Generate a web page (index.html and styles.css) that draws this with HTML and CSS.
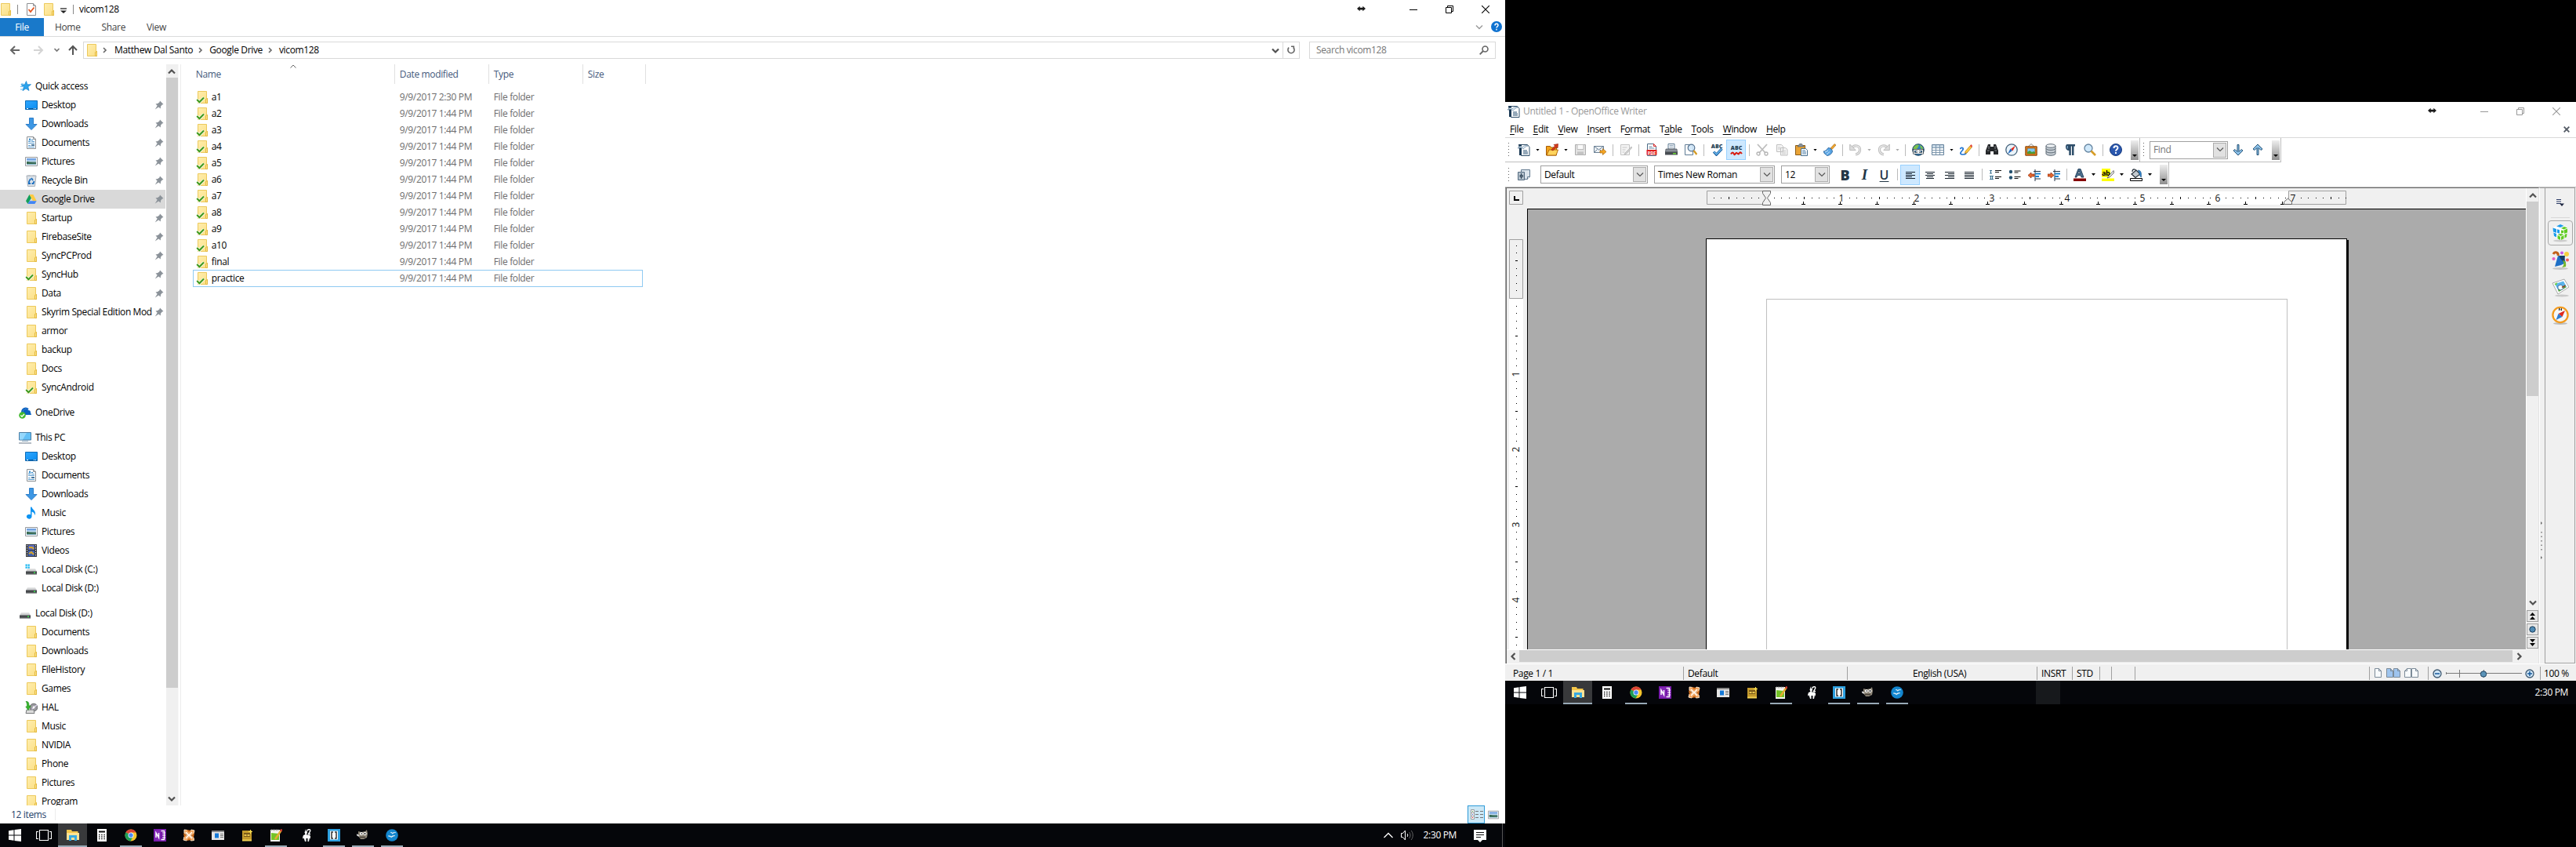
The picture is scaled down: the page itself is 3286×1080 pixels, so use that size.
FILE: index.html
```html
<!DOCTYPE html>
<html lang="en">
<head>
<meta charset="utf-8">
<title>Desktop</title>
<link rel="stylesheet" href="styles.css">
</head>
<body>
<svg class="defs" aria-hidden="true">
<defs>
<linearGradient id="gFold" x1="0" x2="1" y2="1"><stop offset="0" stop-color="#ffeeae"/><stop offset="1" stop-color="#fbdf86"/></linearGradient>
<linearGradient id="gBlue" x1="0" x2="1" y2="1"><stop offset="0" stop-color="#2ea7ff"/><stop offset="1" stop-color="#0a8cf0"/></linearGradient>
<linearGradient id="gDisk" x2="0" y2="1"><stop offset="0" stop-color="#e8e8e8"/><stop offset="1" stop-color="#b9bcbe"/></linearGradient>
<linearGradient id="gSky" x2="0" y2="1"><stop offset="0" stop-color="#4a86d8"/><stop offset=".5" stop-color="#cfe6f5"/><stop offset=".6" stop-color="#3c6e60"/><stop offset="1" stop-color="#7fb2cf"/></linearGradient>
<symbol id="folder" viewBox="0 0 16 16"><path d="M2.5.5h11v9h1v6h-12z" fill="url(#gFold)" stroke="#ecc95c"/><path d="M12.5 15.5v-5l2-1v6z" fill="#ffe48d" stroke="#e3b93f"/></symbol>
<symbol id="synced" viewBox="0 0 16 16"><use href="#folder"/><path d="M1.5 11.2l3 3L10 8.5" fill="none" stroke="#fff" stroke-width="3.6"/><path d="M1.2 11l3.2 3.2L10 8.5" fill="none" stroke="#3f9a1c" stroke-width="2.1"/></symbol>
<symbol id="star" viewBox="0 0 16 16"><path d="M9.5 1.5l1.3 4.3 4.7-.1-3.7 3 1.2 4.8-4-2.6-4 2.8 1.4-5-3.6-2.7 4.6-.1z" fill="#2aa3ec" stroke="#1583cf" stroke-width=".7"/><path d="M3 5h3M2 8.5h3M2 12h3" stroke="#58b7ee"/></symbol>
<symbol id="desktop" viewBox="0 0 16 16"><path d="M.5 2.5h15v11H.5z" fill="url(#gBlue)" stroke="#0b6bb8"/><path d="M1 12.5h14" stroke="#075a9e"/><path d="M2 12.5h2M11 12.5h1M13 12.5h1" stroke="#fff"/></symbol>
<symbol id="download" viewBox="0 0 16 16"><path d="M5.500 .5h5v8H15L8 15.500 1 8.500h4.500z" fill="#3c97e4" stroke="#2c7dc8"/></symbol>
<symbol id="document" viewBox="0 0 16 16"><path d="M2.500 .5h8l3 3v12h-11z" fill="#fff" stroke="#8b8f93"/><path d="M10.500 .5v3h3" fill="none" stroke="#8b8f93"/><path d="M4 6.500h3M8 6.500h4M4 8.500h8M4 11.500h3M4 13.500h8" stroke="#5a9bce"/><path d="M5 5.500l1-3 1 3M8 4.500h2" stroke="#1d7fc8" fill="none"/><path d="M8 10h4v2H8z" fill="#48759a"/></symbol>
<symbol id="picture" viewBox="0 0 16 16"><path d="M.5 2.500h15v11H.5z" fill="#fff" stroke="#92979c"/><path d="M2 4h12v8H2z" fill="url(#gSky)"/><path d="M2 8c4 0 5 2 12 2v1H2z" fill="#396b50"/></symbol>
<symbol id="recycle" viewBox="0 0 16 16"><path d="M2 2l12 0-1.500 13.500h-9z" fill="#dce2e8" stroke="#a7afb8"/><path d="M2 3l3-2 3 1.500L11 1l3 2z" fill="#b8bec5"/><path d="M8 5l2 3M11.500 9l-1 3H8.500M7 12H4.800L5 9.500 7 6" fill="none" stroke="#1b6fc0" stroke-width="1.800"/></symbol>
<symbol id="gdrive" viewBox="0 0 16 16"><path d="M5.500 2L1 10.200 3.500 14 8 6.200z" fill="#13a05c"/><path d="M5.500 2h4.800l4.400 8.200H9.900z" fill="#fdcb43"/><path d="M3.500 14l2.300-3.800h8.900L12.300 14z" fill="#4285f4"/></symbol>
<symbol id="onedrive" viewBox="0 0 16 16"><path d="M5 11V7a4 4 0 0 1 7-2 3 3 0 0 1 3 3l1 3z" fill="#0b62c1"/><path d="M4 8C4 3 9 1 12 4" stroke="#0b62c1" stroke-width="2" fill="none"/><circle cx="4.500" cy="11.500" r="4.300" fill="#45ba31"/><path d="M2.300 11.500l1.700 1.700 3-3.200" stroke="#fff" stroke-width="1.400" fill="none"/></symbol>
<symbol id="pc" viewBox="0 0 16 16"><path d="M.5 1.500h15v9.500H.5z" fill="#62c0f7" stroke="#4a7da3"/><path d="M1 2h9L5 10.500H1z" fill="#95d7fb"/><path d="M4 12.500h8" stroke="#9cb3c4"/><path d="M0 15h16" stroke="#8b98a4" stroke-width="1.300"/></symbol>
<symbol id="music" viewBox="0 0 16 16"><path d="M7 .5h1.500c.5 3 4.500 4 4.500 8 0 1-.5 2-1 2.500.3-3-1.500-4-3.500-4.500v6.300A3.300 2.900 0 1 1 7 10.300z" fill="#0c93f2"/></symbol>
<symbol id="video" viewBox="0 0 16 16"><path d="M1 0h14v16H1z" fill="#33363c"/><path d="M4 1h8v6H4z" fill="#5b6cc0"/><path d="M4 8h8v7H4z" fill="#3f62b4"/><path d="M5 4h4l2 2M5 12l3-2 3 3" stroke="#d8a528" stroke-width="2" fill="none"/><path d="M2.500 1v15M13.500 1v15" stroke="#e6e6e6" stroke-dasharray="1.500 1.500"/></symbol>
<symbol id="disk" viewBox="0 0 16 16"><path d="M3 7h10l2 4H1z" fill="url(#gDisk)"/><path d="M1 10.500h14v4H1z" fill="#46494c"/><path d="M1 14.200h14" stroke="#9a9d9f" stroke-width=".8"/><path d="M11 11.500h2v1.500h-2z" fill="#35e04a"/></symbol>
<symbol id="diskwin" viewBox="0 0 16 16"><use href="#disk"/><path d="M.5 1.500h2.200v2.200H.5zM3.500 1.500h2.300v2.200H3.500zM.5 4.500h2.200v2.200H.5zM3.500 4.500h2.300v2.200H3.500z" fill="#14b4f0"/></symbol>
<symbol id="hal" viewBox="0 0 16 16"><circle cx="11" cy="8" r="4.800" fill="#9a9a9f" stroke="#66686b"/><path d="M11 8l4-3M11 8l-3 4" stroke="#ddd3ee" stroke-width="1.500"/><circle cx="11" cy="8" r="1.400" fill="#fff"/><path d="M2 11h9l1 4.500H1z" fill="#dcdcdc" stroke="#77797b"/><path d="M1 0c4 0 4 4 4 6h2L4 11.500.8 7h1.500C3 4 2 2 1 0z" fill="#36b52d" stroke="#1c8a18" stroke-width=".6"/></symbol>
<symbol id="pin" viewBox="0 0 12 12"><path d="M7 .5L11.500 5l-1.700.6L8 7.800l-.2 2.700-2.500-2L.8 11.500l2.900-4.700L1.500 4.600 4.200 4l2.300-1.800z" fill="#8b9299"/></symbol>
<symbol id="check" viewBox="0 0 14 16"><path d="M1.500 .5h8l3 3v12h-11z" fill="#fff" stroke="#8d8f92"/><path d="M9.500 .5v3h3" fill="none" stroke="#8d8f92"/><path d="M3.500 8l2.500 3 4.500-5.500" stroke="#e4551f" stroke-width="1.800" fill="none"/></symbol>
<symbol id="moves" viewBox="0 0 12 8"><path d="M0 4l4-3.500v2h4v-2L12 4 8 7.500v-2H4v2z" fill="#1a1a1a"/></symbol>
<symbol id="up" viewBox="0 0 10 8"><path d="M1 6.500l4-4 4 4" fill="none" stroke="#505050" stroke-width="2.200"/></symbol>
<symbol id="down" viewBox="0 0 10 8"><path d="M1 1.500l4 4 4-4" fill="none" stroke="#505050" stroke-width="2.200"/></symbol>
<symbol id="thin" viewBox="0 0 10 8"><path d="M1 1.500l4 4 4-4" fill="none" stroke="#5a5a5a" stroke-width="1.200"/></symbol>
<symbol id="min" viewBox="0 0 10 10"><path d="M0 5.500h10" stroke="currentColor"/></symbol>
<symbol id="restore" viewBox="0 0 10 10"><path d="M.5 2.500h7v7h-7zM2.500 2.500v-2h7v7h-2" fill="none" stroke="currentColor"/></symbol>
<symbol id="close" viewBox="0 0 10 10"><path d="M0 0l10 10M10 0L0 10" stroke="currentColor" stroke-width="1.100"/></symbol>
<symbol id="win" viewBox="0 0 16 16"><path d="M0 2.200l6.500-.9v6.200H0zM7.500 1.100L16 0v7.500H7.500zM0 8.500h6.500v6.200L0 13.800zM7.500 8.500H16V16l-8.500-1.100z" fill="#fff"/></symbol>
<symbol id="tview" viewBox="0 0 20 16"><path d="M4.500 1.500h11v13h-11zM3 3.500H.5v9H3M17 3.500h2.500v9H17" fill="none" stroke="#fff" stroke-width="1.100"/></symbol>
<symbol id="texp" viewBox="0 0 16 16"><path d="M0 1h6l1 2h7.500v3H0z" fill="#f4c64a"/><path d="M0 5h16v9H0z" fill="#ffe394"/><path d="M3 15V8h10v7h-3v-4H6v4z" fill="#37a9e1"/></symbol>
<symbol id="tcalc" viewBox="0 0 12 16"><path d="M0 0h12v16H0z" fill="#fff"/><path d="M2 3.500h8" stroke="#111" stroke-width="2"/><path d="M2 7.500h8M2 10h8M2 12.500h8" stroke="#111" stroke-width="1.300" stroke-dasharray="1.400 1.800"/></symbol>
<symbol id="chrome" viewBox="0 0 16 16"><circle cx="8" cy="8" r="7.500" fill="#f6c52b"/><path d="M8 8L1.500 4.200A7.500 7.500 0 0 1 14.600 4.500H8z" fill="#dc4437"/><path d="M1.500 4.200A7.500 7.500 0 0 0 7.500 15.500L10.500 10 8 8z" fill="#1c9c56"/><circle cx="8" cy="8" r="3.500" fill="#fff"/><circle cx="8" cy="8" r="2.700" fill="#4a8af4"/></symbol>
<symbol id="onenote" viewBox="0 0 16 16"><path d="M0 0h16v16H0z" fill="#7719aa"/><path d="M9.500 2.500h4v11h-4" fill="none" stroke="#fff" stroke-width="1.300"/><path d="M11 5h4M11 8h4M11 11h4" stroke="#fff" stroke-width="1.200"/><path d="M1.500 2l7-1v14l-7-1z" fill="#8429b6"/><path d="M3 11V5l3.500 6V5" fill="none" stroke="#fff" stroke-width="1.500"/></symbol>
<symbol id="nexus" viewBox="0 0 16 16"><path d="M2 1l4 .5L8 5l3-4 4 1-1 4-4 2 4 3 .5 3.500-4 .5L8 11l-3 4-4-1 1-4 4-2-4-3z" fill="#f3a55c" stroke="#fbe3c8" stroke-width="1"/><path d="M5 1l3 4 3-3zM5 15l3-4 3 3zM1 5l4 3-3 3zM15 5l-4 3 3 3z" fill="#d9701b"/><path d="M4 4l8 8M12 4l-8 8" stroke="#fff" stroke-width="1.400"/></symbol>
<symbol id="news" viewBox="0 0 16 14"><path d="M0 1h16v12H0z" fill="#e5e5e5"/><path d="M0 1h16v2H0z" fill="#888"/><path d="M4 4.500h5v6H4z" fill="#1479d7"/><path d="M11 5.500h4M11 7.500h4M11 9.500h4" stroke="#777"/></symbol>
<symbol id="book" viewBox="0 0 14 16"><path d="M1 2h12v13H1z" fill="#c49a2c"/><path d="M1 13.500h12v2H1z" fill="#f0d052"/><path d="M3 5h8v5H3z" fill="#7b5a19"/><path d="M3.500 7h3v2h-3zM7.500 7h3v2h-3z" fill="#e8c550"/><path d="M11 1h1v2h2v1h-2v2h-1V4H9V3h2z" fill="#f4df54"/></symbol>
<symbol id="npp" viewBox="0 0 16 16"><path d="M1 1h12v15H1z" fill="#f7f7f2"/><path d="M2 5l10 1v8H2z" fill="#74c327"/><path d="M2 1.500h10" stroke="#999" stroke-width="2" stroke-dasharray="1 1"/><path d="M14.500 2L7 13" stroke="#e5ad31" stroke-width="2.500"/><path d="M15.500 .5L14 3" stroke="#cf3a2f" stroke-width="2.500"/></symbol>
<symbol id="wolf" viewBox="0 0 12 16"><path d="M5 0L3.500 4.500 4.500 7 2 8l-1 3 1 2 .5-2L4 16h1.500v-4h2v4H9l1-5 1 2V9L9.500 7.500H6L7 4V0L5 4z" fill="#fff"/><path d="M7.500 2C8.500-.5 11.500.5 10.500 3L8.500 6.500H11" fill="none" stroke="#fff" stroke-width="1.500"/></symbol>
<symbol id="brackets" viewBox="0 0 16 16"><path d="M0 0h16v16H0z" fill="#2c9fdf"/><path d="M3 2.500h10v11H3z" fill="#fff"/><path d="M7 4H5v8h2M9 4h2v8H9" fill="none" stroke="#333" stroke-width="1.500"/></symbol>
<symbol id="gimp" viewBox="0 0 16 16"><path d="M2 3l4 1 5-1 2-2 1 5-1 5-4 2H5L2 9z" fill="#8d8577"/><circle cx="6" cy="6" r="2" fill="#fff"/><circle cx="10.500" cy="6" r="2.100" fill="#fff"/><circle cx="6.300" cy="6" r=".8"/><circle cx="10.500" cy="6" r=".9"/><path d="M0 7l3 2" stroke="#d8d8d8" stroke-width="2"/><path d="M4 10.500h7" stroke="#463f37" stroke-width="1.500"/></symbol>
<symbol id="ooo" viewBox="0 0 16 16"><circle cx="8" cy="8" r="7.800" fill="#1386cf"/><path d="M6 4.500c1.500-.6 2 0 2.800.7C10 4 11.500 4.200 13 4.600c-2 0-3 .6-4.300 1.700C8 5.200 7 4.700 6 4.500zM3 9c2-.8 3-.2 4 .7 1.700-1.300 3.200-1.400 5-1-2 .2-3 .9-4.700 2.100C5.800 9.800 4.800 9.300 3 9z" fill="#fff" stroke="#fff" stroke-width=".4"/></symbol>
<symbol id="writer" viewBox="0 0 16 16"><path d="M4.500 1.500h8l2.500 3v11h-10.500z" fill="#fdfeff" stroke="#31506b"/><path d="M1 1h4v14H2V8z" fill="#1c3a55"/><path d="M0 6c2-3 5-3 6-1 3-3 5-3 7-2-2 0-4 2-6 4-2-2-4-2-7-1z" fill="#e7f2fa" stroke="#4b6f8e" stroke-width=".6"/><path d="M7 9h5M7 11h6M7 13h6" stroke="#2f5574"/></symbol>
<symbol id="o-open" viewBox="0 0 16 16"><path d="M.5 15V3.500h5l1 1.500h7v10z" fill="#f3a31b" stroke="#a35c0a"/><path d="M1 15l3-7h11.500l-2.500 7z" fill="#ffd35b" stroke="#b36b0c"/><path d="M7 8l4.500-5L10 1.500 15.500.5 15 6l-1.500-1.500L9 9z" fill="#d93a1b" stroke="#8a1a08" stroke-width=".6"/></symbol>
<symbol id="o-save" viewBox="0 0 16 16"><path d="M1.500 1.500h13v13h-13z" fill="#e2e2e2" stroke="#adadad"/><path d="M4 1.500h8v6H4z" fill="#fafafa" stroke="#bcbcbc"/><path d="M4 10.500h8v4H4z" fill="#c3c3c3"/></symbol>
<symbol id="o-mail" viewBox="0 0 16 16"><path d="M.5 3.500h12v8H.5z" fill="#eef3f7" stroke="#6c8195"/><path d="M.5 3.500l6 4.500 6-4.500M.5 11.500l4-4M8 8l2 2" fill="none" stroke="#6c8195"/><path d="M8 9h3.500V6.500l4.500 4-4.500 4V12H8z" fill="#f6a623" stroke="#a5640d" stroke-width=".7"/></symbol>
<symbol id="o-edit" viewBox="0 0 16 16"><path d="M1.500 1.500h11v13h-11z" fill="#f4f4f4" stroke="#c4c4c4"/><path d="M3.500 5h6M3.500 8h4M3.500 11h3" stroke="#c8c8c8"/><path d="M15 4l-8 8-1 2 2.500-.8 7.500-8z" fill="#d0d0d0" stroke="#aaa" stroke-width=".6"/></symbol>
<symbol id="o-pdf" viewBox="0 0 16 16"><path d="M2.500 .5h8l3 3v12h-11z" fill="#fff" stroke="#4a6b87"/><path d="M10.500 .5v3h3z" fill="#d8e4ee" stroke="#d33"/><path d="M4.500 4h4M4.500 6h7" stroke="#6c8aa4"/><path d="M1.500 8h13v6.500h-13z" fill="#e01f1f"/><text x="8" y="13.500" class="pdf">PDF</text></symbol>
<symbol id="o-print" viewBox="0 0 16 16"><path d="M4 .5h8V7H4z" fill="#fff" stroke="#5c7891"/><path d="M5.500 2.500h5M5.500 4.500h5" stroke="#8aa1b6"/><path d="M1 7h14l.8 6H.2z" fill="#8a9098" stroke="#454b52" stroke-width=".7"/><path d="M0 10.500h16v4H0z" fill="#474c52"/><path d="M10 12h4v1.500h-4z" fill="#6bd532"/></symbol>
<symbol id="o-preview" viewBox="0 0 16 16"><path d="M.5 1.500h10v13H.5z" fill="#fff" stroke="#5f7b95"/><circle cx="8.500" cy="5.500" r="4.300" fill="#cfe6f7" fill-opacity=".9" stroke="#54718e" stroke-width="1.200"/><path d="M11.500 9l4 5" stroke="#d59b24" stroke-width="2.400"/></symbol>
<symbol id="o-abc" viewBox="0 0 16 16"><text x="8" y="6" class="abc">ABC</text><path d="M4 10.500l3.500 3.700 7-7.500" stroke="#1c5f9e" stroke-width="3.200" fill="none"/><path d="M4.300 10.500l3.200 3.200 6.800-7" stroke="#6bb9ef" stroke-width="1.500" fill="none"/></symbol>
<symbol id="o-spell" viewBox="0 0 16 16"><text x="8" y="8" class="abc">ABC</text><path d="M1 13.500c1.500-3 3-2.500 4 0s2-2.500 3.500-1.500 2 2.500 3 .5 2-1.500 3.500.5" stroke="#d8190d" stroke-width="2" fill="none"/></symbol>
<symbol id="o-cut" viewBox="0 0 16 16"><path d="M2 1l10 11M14 1L4 12" stroke="#bdbdbd" stroke-width="1.800"/><circle cx="3" cy="13" r="2" fill="none" stroke="#b3b3b3" stroke-width="1.300"/><circle cx="13" cy="13" r="2" fill="none" stroke="#b3b3b3" stroke-width="1.300"/></symbol>
<symbol id="o-copy" viewBox="0 0 16 16"><path d="M1.500 1.500h6l2 2v7h-8zM6.500 5.500h6l2.500 2v7.500h-8.500z" fill="#f4f4f4" stroke="#c0c0c0"/><path d="M3 5h3M3 7h3M8 9h5M8 11h5M8 13h5" stroke="#ccc"/></symbol>
<symbol id="o-paste" viewBox="0 0 16 16"><path d="M.5 2.500h12v12H.5z" fill="#e9a336" stroke="#8a5a15"/><path d="M3 4l1-2h1l1-2h2l1 2h1l1 2z" fill="#8a949d" stroke="#4c555d" stroke-width=".6"/><path d="M7.500 6.500h6l2 2v7h-8z" fill="#fff" stroke="#48708f"/><path d="M9 9h4M9 11h5M9 13h5" stroke="#4d7fa8"/></symbol>
<symbol id="o-brush" viewBox="0 0 16 16"><path d="M9 6l5-5.500L16 2l-5 5.500z" fill="#f0a52c" stroke="#9c6110" stroke-width=".6"/><path d="M6 5.500c3 0 5 2 5.500 4.500-1 4-5 5.500-7 5.500L3 14l-1.500-1L0 10c2 0 4-1.500 6-4.500z" fill="#5aa5e4" stroke="#1b5590" stroke-width=".8"/><path d="M2 11l4-2M4 14l4-3.500" stroke="#cfe6f9"/></symbol>
<symbol id="o-undo" viewBox="0 0 16 16"><path d="M3.500 5.500C6 1 14 2.500 13.500 8.500c-.3 3-2.500 5-5.500 5.500" fill="none" stroke="#bdbdbd" stroke-width="3.200"/><path d="M3.500 5.500C6 1 14 2.500 13.500 8.500c-.3 3-2.500 5-5.500 5.500" fill="none" stroke="#ececec" stroke-width="1.200"/><path d="M.7 1v7.500h7.500z" fill="#ddd" stroke="#bdbdbd"/></symbol>
<symbol id="o-link" viewBox="0 0 16 16"><circle cx="8" cy="8" r="7.300" fill="#2f7fc0" stroke="#25485f"/><path d="M2 5c2-4 6-4 7-3L7 6 4 8H1.500zM10 2c3 1 4 3 4.500 6L11 6z" fill="#7cc24c"/><path d="M2.500 8.300h5v4h-5zM8.500 8.300h5v4h-5zM5 10.300h6" fill="none" stroke="#2b3338" stroke-width="2.600"/><path d="M2.500 8.300h5v4h-5zM8.500 8.300h5v4h-5zM5 10.300h6" fill="none" stroke="#e9eef2" stroke-width="1.200"/></symbol>
<symbol id="o-table" viewBox="0 0 16 16"><path d="M.5 1.500h15v13H.5z" fill="#fff" stroke="#64829c"/><path d="M1 2h14v3H1z" fill="#c9d9e6"/><path d="M.5 5.500h15M.5 8.500h15M.5 11.500h15M5.500 1.500v13M10.500 1.500v13" stroke="#7e98ae"/></symbol>
<symbol id="o-draw" viewBox="0 0 16 16"><path d="M0 7c3-3 6-1 3 2s-3 5 1 5 5-3 5-2" fill="none" stroke="#2377d4" stroke-width="1.700"/><path d="M13.500 2.500l-6.500 7.500-.5 2.500L9 12l6.500-7.500z" fill="#ffc83c" stroke="#a76e10" stroke-width=".7"/><path d="M13 3l1.500-2L16 3l-1 2z" fill="#e2403a"/></symbol>
<symbol id="o-find" viewBox="0 0 16 16"><path d="M3 1h3v3h4V1h3l3 8v5h-6v-4H6v4H0V9z" fill="#26282b"/><path d="M2 9h2.500M11.500 9H14M4 3v4M12 3v4" stroke="#83888c"/></symbol>
<symbol id="o-nav" viewBox="0 0 16 16"><circle cx="8" cy="8" r="7.200" fill="#eaf4fb" stroke="#44627c" stroke-width="1.300"/><path d="M13 2.500L9.500 9.500 7 7z" fill="#e02b1d"/><path d="M3 13.500L6.500 6.500 9 9z" fill="#1e66bd"/></symbol>
<symbol id="o-gal" viewBox="0 0 16 16"><path d="M4 4l4-3.500L12 4" fill="none" stroke="#8a8a8a"/><path d="M.8 3.800h14.400v11.400H.8z" fill="#e2801f" stroke="#7f3f08"/><path d="M3 6h10v7H3z" fill="#7fc6f0" stroke="#7f3f08" stroke-width=".6"/><path d="M3 13v-2l3-2 3 2 2-1 2 1v2z" fill="#4c9a35"/></symbol>
<symbol id="o-db" viewBox="0 0 16 16"><path d="M2 3v10c0 3 12 3 12 0V3z" fill="#c3cbd2" stroke="#5e6a75"/><ellipse cx="8" cy="3" rx="6" ry="2.300" fill="#eef2f5" stroke="#5e6a75"/><path d="M2 6.500c1 2.500 11 2.500 12 0M2 10c1 2.500 11 2.500 12 0" fill="none" stroke="#5e6a75"/></symbol>
<symbol id="o-para" viewBox="0 0 16 16"><path d="M2 1h12v2.500h-1.500V15H10V3.500H8.800V15H6.300V9C1 9 1 1 4 1z" fill="#2d4d69"/><path d="M4 3c-1 1-1 3 1 4V3z" fill="#7ba0bf"/></symbol>
<symbol id="o-zoom" viewBox="0 0 16 16"><circle cx="6" cy="6" r="5" fill="#cfe8fa" stroke="#6484a0" stroke-width="1.300"/><path d="M9.500 9.500l5.500 5.500" stroke="#d79d27" stroke-width="2.600"/></symbol>
<symbol id="o-help" viewBox="0 0 16 16"><circle cx="8" cy="8" r="7.500" fill="#2a57ae" stroke="#173a7e"/><path d="M5.500 6c0-3.500 5-3.500 5-.5 0 2-2.500 2-2.500 4.200M8 11v2" fill="none" stroke="#fff" stroke-width="1.900"/></symbol>
<symbol id="o-style" viewBox="0 0 16 16"><path d="M4.500 1.500h11v9l-3 3h-8z" fill="#dbe4ec" stroke="#60788e"/><path d="M15.500 10.500h-3v3" fill="#fff" stroke="#60788e"/><path d="M.5 4.500h8v10h-8z" fill="#b5c2cd" stroke="#52697e"/><path d="M4.500 6v7M3 8.500h3.500v2H3z" stroke="#263d52" fill="#fff"/></symbol>
<symbol id="al" viewBox="0 0 16 16"><path d="M2 4.500h12M2 6.500h8M2 8.500h12M2 10.500h8M2 12.500h12" stroke="#15202b"/></symbol>
<symbol id="ac" viewBox="0 0 16 16"><path d="M2 4.500h12M4 6.500h8M2 8.500h12M4 10.500h8M3 12.500h10" stroke="#15202b"/></symbol>
<symbol id="ar" viewBox="0 0 16 16"><path d="M2 4.500h12M6 6.500h8M2 8.500h12M6 10.500h8M2 12.500h12" stroke="#15202b"/></symbol>
<symbol id="aj" viewBox="0 0 16 16"><path d="M2 4.500h12M2 6.500h12M2 8.500h12M2 10.500h12M2 12.500h12" stroke="#15202b"/></symbol>
<symbol id="o-num" viewBox="0 0 16 16"><path d="M2.500 2v4M1 2.500h3M1 6h3M1 9.500h5M1 13.500h5M2.500 9.500v4M4.500 9.500v4" stroke="#3a7190"/><path d="M8 2.500h8M8 4.500h5M8 10.500h8M8 12.500h5" stroke="#111"/></symbol>
<symbol id="o-bul" viewBox="0 0 16 16"><circle cx="3" cy="4" r="2.200" fill="#24516f"/><circle cx="3" cy="11.500" r="2.200" fill="#24516f"/><path d="M7.500 3h8M7.500 5h5M7.500 10.500h8M7.500 12.500h5" stroke="#111"/></symbol>
<symbol id="o-out" viewBox="0 0 16 16"><path d="M7 3.500h9M9 13h7M9 1v15" stroke="#234"/><path d="M9 6.500h7M9 10h5" stroke="#1a83cf" stroke-width="2"/><path d="M0 8.500L4 5v2h4v3H4v2z" fill="#e6672c" stroke="#8a2a0c" stroke-width=".7"/></symbol>
<symbol id="o-in" viewBox="0 0 16 16"><path d="M7 3.500h9M9 13h7M9 1v15" stroke="#234"/><path d="M9 6.500h7M9 10h5" stroke="#1a83cf" stroke-width="2"/><path d="M8 8.500L4 5v2H0v3h4v2z" fill="#e6672c" stroke="#8a2a0c" stroke-width=".7"/></symbol>
<symbol id="o-color" viewBox="0 0 16 16"><path d="M2 11h2l.8-2.500h4.400L10 11h3L9 .5H6zM5.500 6.500L7 2.500l1.500 4z" fill="#4d7394" stroke="#1f3b54" stroke-width=".9"/><path d="M0 12.500h16V16H0z" fill="#850000"/></symbol>
<symbol id="o-high" viewBox="0 0 16 16"><path d="M0 0h11v11H0zM0 12.500h16V16H0z" fill="#ff0"/><text x="0" y="9" class="hl">ab</text><path d="M15 2.500L9 9l-2 3 3-1 6-6z" fill="#e3e3e3" stroke="#555" stroke-width=".8"/></symbol>
<symbol id="o-fill" viewBox="0 0 16 16"><path d="M.5 12.500h15v3H.5z" fill="#fff" stroke="#000"/><path d="M2 7l6-5 5 5-6 4.500z" fill="#c3c9ce" stroke="#2a333c" stroke-width="1.200"/><path d="M3 4c0-4 4-4 5-1" fill="none" stroke="#2a333c" stroke-width="1.200"/><path d="M10 2c4 0 5 3 4.500 9-1.500 0-2-3-2.500-5z" fill="#2f81c6" stroke="#1b4d7a" stroke-width=".5"/></symbol>
<symbol id="o-down" viewBox="0 0 14 16"><path d="M6 1.500h2v9L11 7.500l2 1.500-6 6-6-6 2-1.500 3 3z" fill="#8cc2ea" stroke="#275478"/></symbol>
<symbol id="vpage" viewBox="0 0 9 12"><path d="M.5 .5h5l3 3v8h-8z" fill="currentColor" stroke="#7c8b99"/><path d="M5.500 .5v3h3" fill="none" stroke="#7c8b99"/></symbol>
<pattern id="hr" x="333" width="96" height="18" patternUnits="userSpaceOnUse"><path d="M10 9h1v1h-1zM19 9h1v1h-1zM29 9h1v1h-1zM38 9h1v1h-1zM48 8h1v3h-1zM58 9h1v1h-1zM67 9h1v1h-1zM77 9h1v1h-1zM86 9h1v1h-1z"/></pattern>
<pattern id="vr" y="113" width="26" height="96" patternUnits="userSpaceOnUse"><path d="M12 10h1v1h-1zM12 19h1v1h-1zM12 29h1v1h-1zM12 38h1v1h-1zM11 48h3v1h-3zM12 58h1v1h-1zM12 67h1v1h-1zM12 77h1v1h-1zM12 86h1v1h-1z"/></pattern>
<pattern id="tabs" x="355" width="47" height="18" patternUnits="userSpaceOnUse"><path d="M25 14h1v3h2v1h-5v-1h2z"/></pattern>
</defs>
</svg>

<main class="screens">
<section class="screen">
  <header class="title">
    <svg class="i16 f"><use href="#folder"/></svg><i class="vline"></i>
    <svg class="chk"><use href="#check"/></svg><svg class="i16"><use href="#folder"/></svg>
    <svg class="qat" viewBox="0 0 8 8"><path d="M0 1h8" stroke="#222" stroke-width="1.300"/><path d="M0 3.500h8L4 7z" fill="#222"/></svg><i class="vline b"></i>
    <span>vicom128</span>
    <div class="wctl"><svg class="mv"><use href="#moves"/></svg><svg><use href="#min"/></svg><svg><use href="#restore"/></svg><svg><use href="#close"/></svg></div>
  </header>
  <nav class="tabs"><b>File</b><span>Home</span><span>Share</span><span>View</span>
    <svg class="chev" viewBox="0 0 10 8"><path d="M1 1.500l4 4 4-4" fill="none" stroke="#999" stroke-width="1.400"/></svg>
    <svg class="help" viewBox="0 0 14 14"><circle cx="7" cy="7" r="7" fill="#0f72d0"/><path d="M5 5.500c0-3 4-3 4-.3 0 1.500-2 1.700-2 3.400M7 9.800v1.700" stroke="#fff" stroke-width="1.500" fill="none"/></svg>
  </nav>
  <div class="addr">
    <svg class="arrows" viewBox="0 0 106 22"><path d="M25 11H14M19 6l-5 5 5 5" fill="none" stroke="#666" stroke-width="2"/><path d="M43 11h11M49 6l5 5-5 5" fill="none" stroke="#d4d4d4" stroke-width="2"/><path d="M69.500 9l3 3 3-3" fill="none" stroke="#777" stroke-width="1.700"/><path d="M93 17V6M88 11l5-5 5 5" fill="none" stroke="#555" stroke-width="2"/></svg>
    <div class="path"><svg class="i16"><use href="#folder"/></svg><svg class="cr" viewBox="0 0 6 8"><path d="M1 1l3 3-3 3"/></svg><span>Matthew Dal Santo</span><svg class="cr" viewBox="0 0 6 8"><path d="M1 1l3 3-3 3"/></svg><span>Google Drive</span><svg class="cr" viewBox="0 0 6 8"><path d="M1 1l3 3-3 3"/></svg><span>vicom128</span>
      <svg class="dn"><use href="#down"/></svg><svg class="ref" viewBox="0 0 21 20"><path d="M13.500 6.500A4.300 4.300 0 1 1 7.500 6.500M10.500 5h3.500v3.500" fill="none" stroke="#666" stroke-width="1.700"/></svg></div>
    <div class="search"><span>Search vicom128</span><svg viewBox="0 0 12 12"><circle cx="7.500" cy="4.500" r="3.500" fill="none" stroke="#666" stroke-width="1.600"/><path d="M5 7L.7 11.300" stroke="#666" stroke-width="1.800"/></svg></div>
  </div>
  <div class="body">
    <aside class="tree">
      <div class="r l1"><svg><use href="#star"/></svg><span>Quick access</span></div>
      <div class="r"><svg><use href="#desktop"/></svg><span>Desktop</span><svg class="pin"><use href="#pin"/></svg></div>
      <div class="r"><svg><use href="#download"/></svg><span>Downloads</span><svg class="pin"><use href="#pin"/></svg></div>
      <div class="r"><svg><use href="#document"/></svg><span>Documents</span><svg class="pin"><use href="#pin"/></svg></div>
      <div class="r"><svg><use href="#picture"/></svg><span>Pictures</span><svg class="pin"><use href="#pin"/></svg></div>
      <div class="r"><svg><use href="#recycle"/></svg><span>Recycle Bin</span><svg class="pin"><use href="#pin"/></svg></div>
      <div class="r on"><svg><use href="#gdrive"/></svg><span>Google Drive</span><svg class="pin"><use href="#pin"/></svg></div>
      <div class="r"><svg><use href="#folder"/></svg><span>Startup</span><svg class="pin"><use href="#pin"/></svg></div>
      <div class="r"><svg><use href="#folder"/></svg><span>FirebaseSite</span><svg class="pin"><use href="#pin"/></svg></div>
      <div class="r"><svg><use href="#folder"/></svg><span>SyncPCProd</span><svg class="pin"><use href="#pin"/></svg></div>
      <div class="r"><svg><use href="#synced"/></svg><span>SyncHub</span><svg class="pin"><use href="#pin"/></svg></div>
      <div class="r"><svg><use href="#folder"/></svg><span>Data</span><svg class="pin"><use href="#pin"/></svg></div>
      <div class="r"><svg><use href="#folder"/></svg><span class="long">Skyrim Special Edition Mod</span><svg class="pin"><use href="#pin"/></svg></div>
      <div class="r"><svg><use href="#folder"/></svg><span>armor</span></div>
      <div class="r"><svg><use href="#folder"/></svg><span>backup</span></div>
      <div class="r"><svg><use href="#folder"/></svg><span>Docs</span></div>
      <div class="r"><svg><use href="#synced"/></svg><span>SyncAndroid</span></div>
      <div class="r l1 gap"><svg><use href="#onedrive"/></svg><span>OneDrive</span></div>
      <div class="r l1 gap"><svg><use href="#pc"/></svg><span>This PC</span></div>
      <div class="r"><svg><use href="#desktop"/></svg><span>Desktop</span></div>
      <div class="r"><svg><use href="#document"/></svg><span>Documents</span></div>
      <div class="r"><svg><use href="#download"/></svg><span>Downloads</span></div>
      <div class="r"><svg><use href="#music"/></svg><span>Music</span></div>
      <div class="r"><svg><use href="#picture"/></svg><span>Pictures</span></div>
      <div class="r"><svg><use href="#video"/></svg><span>Videos</span></div>
      <div class="r"><svg><use href="#diskwin"/></svg><span>Local Disk (C:)</span></div>
      <div class="r"><svg><use href="#disk"/></svg><span>Local Disk (D:)</span></div>
      <div class="r l1 gap"><svg><use href="#disk"/></svg><span>Local Disk (D:)</span></div>
      <div class="r"><svg><use href="#folder"/></svg><span>Documents</span></div>
      <div class="r"><svg><use href="#folder"/></svg><span>Downloads</span></div>
      <div class="r"><svg><use href="#folder"/></svg><span>FileHistory</span></div>
      <div class="r"><svg><use href="#folder"/></svg><span>Games</span></div>
      <div class="r"><svg><use href="#hal"/></svg><span>HAL</span></div>
      <div class="r"><svg><use href="#folder"/></svg><span>Music</span></div>
      <div class="r"><svg><use href="#folder"/></svg><span>NVIDIA</span></div>
      <div class="r"><svg><use href="#folder"/></svg><span>Phone</span></div>
      <div class="r"><svg><use href="#folder"/></svg><span>Pictures</span></div>
      <div class="r"><svg><use href="#folder"/></svg><span>Program</span></div>
    </aside>
    <div class="vbar"><svg><use href="#up"/></svg><i></i><svg class="end"><use href="#down"/></svg></div>
    <section class="files">
      <div class="head"><span>Name<svg viewBox="0 0 8 5"><path d="M.5 4.500L4 1l3.500 3.500" fill="none" stroke="#666"/></svg></span><span>Date modified</span><span>Type</span><span>Size</span></div>
      <div class="fr"><svg><use href="#synced"/></svg><b>a1</b><span>9/9/2017 2:30 PM</span><span>File folder</span></div>
      <div class="fr"><svg><use href="#synced"/></svg><b>a2</b><span>9/9/2017 1:44 PM</span><span>File folder</span></div>
      <div class="fr"><svg><use href="#synced"/></svg><b>a3</b><span>9/9/2017 1:44 PM</span><span>File folder</span></div>
      <div class="fr"><svg><use href="#synced"/></svg><b>a4</b><span>9/9/2017 1:44 PM</span><span>File folder</span></div>
      <div class="fr"><svg><use href="#synced"/></svg><b>a5</b><span>9/9/2017 1:44 PM</span><span>File folder</span></div>
      <div class="fr"><svg><use href="#synced"/></svg><b>a6</b><span>9/9/2017 1:44 PM</span><span>File folder</span></div>
      <div class="fr"><svg><use href="#synced"/></svg><b>a7</b><span>9/9/2017 1:44 PM</span><span>File folder</span></div>
      <div class="fr"><svg><use href="#synced"/></svg><b>a8</b><span>9/9/2017 1:44 PM</span><span>File folder</span></div>
      <div class="fr"><svg><use href="#synced"/></svg><b>a9</b><span>9/9/2017 1:44 PM</span><span>File folder</span></div>
      <div class="fr"><svg><use href="#synced"/></svg><b>a10</b><span>9/9/2017 1:44 PM</span><span>File folder</span></div>
      <div class="fr"><svg><use href="#synced"/></svg><b>final</b><span>9/9/2017 1:44 PM</span><span>File folder</span></div>
      <div class="fr foc"><svg><use href="#synced"/></svg><b>practice</b><span>9/9/2017 1:44 PM</span><span>File folder</span></div>
    </section>
  </div>
  <footer class="items"><span>12 items</span><i></i>
    <div class="modes"><svg class="on" viewBox="0 0 22 23"><path d="M4.500 5.500h4v12h-4zM4.500 9.500h4M4.500 13.500h4" fill="#fff" stroke="#999"/><path d="M10 7.500h4M16 7.500h4M10 11.500h4M16 11.500h4M10 15.500h4M16 15.500h4" stroke="#777"/><path d="M6 7h1v1H6z" fill="#2c8a2c"/><path d="M6 11h1v1H6z" fill="#35c"/><path d="M6 15h1v1H6z" fill="#d02"/></svg><svg class="th"><use href="#picture"/></svg></div>
  </footer>
  <div class="task">
    <a><svg><use href="#win"/></svg></a><a><svg class="w20"><use href="#tview"/></svg></a><a class="act"><svg><use href="#texp"/></svg></a><a><svg><use href="#tcalc"/></svg></a><a class="run"><svg><use href="#chrome"/></svg></a><a><svg><use href="#onenote"/></svg></a><a><svg><use href="#nexus"/></svg></a><a><svg><use href="#news"/></svg></a><a><svg><use href="#book"/></svg></a><a class="run"><svg><use href="#npp"/></svg></a><a class="wf"><svg><use href="#wolf"/></svg></a><a class="run"><svg><use href="#brackets"/></svg></a><a class="run"><svg><use href="#gimp"/></svg></a><a class="run"><svg><use href="#ooo"/></svg></a>
    <div class="tray"><svg class="tu" viewBox="0 0 12 8"><path d="M.5 7L6 1.500 11.500 7" fill="none" stroke="#fff" stroke-width="1.300"/></svg><svg class="vol" viewBox="0 0 17 14"><path d="M.5 4.500h2l3-3.500v12l-3-3.500h-2z" fill="none" stroke="#fff"/><path d="M8 5c1 1 1 3 0 4" stroke="#fff" fill="none"/><path d="M10.500 3c2 2 2 6 0 8M13 1c3 3 3 9 0 12" stroke="#666" fill="none"/></svg><span>2:30 PM</span><svg class="note" viewBox="0 0 16 16"><path d="M0 0h16v13h-5l-3 3-3-3H0z" fill="#fff"/><path d="M3 3.500h10M3 6.500h10M3 9.500h6" stroke="#111"/></svg><i></i></div>
  </div>
</section>

<section class="second">
  <div class="writer">
    <header class="wtitle"><svg class="i16"><use href="#writer"/></svg><span>Untitled 1 - OpenOffice Writer</span><div class="wctl"><svg class="mv"><use href="#moves"/></svg><svg><use href="#min"/></svg><svg><use href="#restore"/></svg><svg><use href="#close"/></svg></div></header>
    <nav class="menu"><span><u>F</u>ile</span><span><u>E</u>dit</span><span><u>V</u>iew</span><span><u>I</u>nsert</span><span>F<u>o</u>rmat</span><span>T<u>a</u>ble</span><span><u>T</u>ools</span><span><u>W</u>indow</span><span><u>H</u>elp</span><svg viewBox="0 0 8 8"><path d="M.7.7l6.600 6.600M7.300.7L.7 7.300" stroke="#555c66" stroke-width="1.900"/></svg></nav>
    <div class="bars">
      <div class="bar std"><i class="grip"></i>
        <a><svg><use href="#writer"/></svg></a><i class="dd"></i><a><svg><use href="#o-open"/></svg></a><i class="dd"></i><a><svg><use href="#o-save"/></svg></a><a><svg><use href="#o-mail"/></svg></a><i class="sep"></i>
        <a><svg><use href="#o-edit"/></svg></a><i class="sep"></i><a><svg><use href="#o-pdf"/></svg></a><a><svg><use href="#o-print"/></svg></a><a><svg><use href="#o-preview"/></svg></a><i class="sep"></i>
        <a><svg><use href="#o-abc"/></svg></a><a class="on"><svg><use href="#o-spell"/></svg></a><i class="sep"></i><a><svg><use href="#o-cut"/></svg></a><a><svg><use href="#o-copy"/></svg></a><a><svg><use href="#o-paste"/></svg></a><i class="dd"></i><a><svg><use href="#o-brush"/></svg></a><i class="sep"></i>
        <a><svg><use href="#o-undo"/></svg></a><i class="dd off"></i><a class="flip"><svg><use href="#o-undo"/></svg></a><i class="dd off"></i><i class="sep"></i><a><svg><use href="#o-link"/></svg></a><a><svg><use href="#o-table"/></svg></a><i class="dd"></i><a><svg><use href="#o-draw"/></svg></a><i class="sep"></i>
        <a><svg><use href="#o-find"/></svg></a><a><svg><use href="#o-nav"/></svg></a><a><svg><use href="#o-gal"/></svg></a><a><svg><use href="#o-db"/></svg></a><a><svg><use href="#o-para"/></svg></a><a><svg><use href="#o-zoom"/></svg></a><i class="sep"></i><a><svg><use href="#o-help"/></svg></a><i class="more"></i>
      </div>
      <div class="bar find"><i class="grip"></i><div class="combo fi"><span>Find</span><b><svg><use href="#thin"/></svg></b></div><a><svg><use href="#o-down"/></svg></a><a class="turn"><svg><use href="#o-down"/></svg></a><i class="more"></i></div>
    </div>
    <div class="bars two">
      <div class="bar fmt"><i class="grip"></i><a><svg><use href="#o-style"/></svg></a><div class="combo c1"><span>Default</span><b><svg><use href="#thin"/></svg></b></div><div class="combo c2"><span>Times New Roman</span><b><svg><use href="#thin"/></svg></b></div><div class="combo c3"><span>12</span><b><svg><use href="#thin"/></svg></b></div>
        <a class="tx bo">B</a><a class="tx it">I</a><a class="tx un">U</a><i class="sep"></i><a class="on"><svg><use href="#al"/></svg></a><a><svg><use href="#ac"/></svg></a><a><svg><use href="#ar"/></svg></a><a><svg><use href="#aj"/></svg></a><i class="sep"></i>
        <a><svg><use href="#o-num"/></svg></a><a><svg><use href="#o-bul"/></svg></a><a><svg><use href="#o-out"/></svg></a><a><svg><use href="#o-in"/></svg></a><i class="sep"></i><a><svg><use href="#o-color"/></svg></a><i class="dd"></i><a><svg><use href="#o-high"/></svg></a><i class="dd"></i><a><svg><use href="#o-fill"/></svg></a><i class="dd"></i><i class="more"></i>
      </div>
    </div>
    <div class="edit">
      <div class="pane">
        <div class="up">
          <div class="left">
            <svg class="hrule" viewBox="2 110 1300 26">
              <path d="M5.500 113.500h17v17h-17z" fill="#f0f0f0" stroke="#a0a0a0"/><path d="M12 120v5h6" fill="none" stroke="#000" stroke-width="2"/>
              <path d="M333 114h667v17H333z" fill="#fff"/><path d="M257.500 113.500h75v17h-75zM999.500 113.500h73v17h-73z" fill="#f0f0f0" stroke="#a0a0a0"/>
              <g transform="translate(0 113)"><path d="M262 0h811v18H262z" fill="url(#hr)"/><path d="M340 0h655v18H340z" fill="url(#tabs)"/></g>
              <path d="M328.500 113.500h10v3l-4 6 4 6v3h-10v-3l4-6-4-6zM993.500 130.500v-3l5-4.500 5 4.500v3z" fill="#f0f0f0" stroke="#666"/>
              <g class="num"><text x="429" y="127">1</text><text x="525" y="127">2</text><text x="621" y="127">3</text><text x="717" y="127">4</text><text x="813" y="127">5</text><text x="909" y="127">6</text><text x="1005" y="127">7</text></g>
            </svg>
            <div class="work">
              <svg class="vrule" viewBox="2 136 26 562"><path d="M5 250h18v448H5z" fill="#fff"/><path d="M5.500 175.500h17v75h-17z" fill="#f0f0f0" stroke="#a0a0a0"/><g transform="translate(2 137)"><path d="M0 42h26v519H0z" fill="url(#vr)"/></g>
                <g class="num"><text transform="translate(18 347) rotate(-90)">1</text><text transform="translate(18 443) rotate(-90)">2</text><text transform="translate(18 539) rotate(-90)">3</text><text transform="translate(18 635) rotate(-90)">4</text></g></svg>
              <div class="canvas"><div class="page"><div class="frame"></div></div></div>
            </div>
          </div>
          <div class="vs"><svg><use href="#up"/></svg><i></i><svg class="end"><use href="#down"/></svg>
            <b><svg viewBox="0 0 15 15"><path d="M4 7h7L7.500 3zM4 12h7L7.500 8z"/></svg></b><b><svg viewBox="0 0 15 15"><circle cx="7.500" cy="7.500" r="3.700" fill="#4f8ab4" stroke="#1e3f5a"/></svg></b><b><svg viewBox="0 0 15 15"><path d="M4 3h7L7.500 7zM4 8h7l-3.500 4z"/></svg></b></div>
        </div>
        <div class="hs"><svg viewBox="0 0 8 10"><path d="M6.500 1l-4 4 4 4" fill="none" stroke="#505050" stroke-width="2.200"/></svg><i></i><svg class="rt" viewBox="0 0 8 10"><path d="M1.500 1l4 4-4 4" fill="none" stroke="#505050" stroke-width="2.200"/></svg></div>
      </div>
      <div class="split"><svg viewBox="0 0 3 52"><path d="M0 1l2 2-2 2zM0 45l2 2-2 2z" fill="#666"/><path d="M1 14v26" stroke="#777" stroke-width="1.500" stroke-dasharray="1.500 4"/></svg></div>
      <aside class="deck">
        <svg class="dm" viewBox="0 0 10 9"><path d="M0 .5h6M0 3h6M0 5.500h6" stroke="#2a3a66"/><path d="M4 5.500h6L7 9z" fill="#1c2440"/></svg>
        <i class="rule"></i>
        <div class="dk on"><svg viewBox="0 0 22 24"><ellipse cx="11" cy="22" rx="9" ry="1.500" fill="#ccc"/><path d="M2 5l9-4 9 4-1 12-8 4-8-4z" fill="#fff"/><path d="M6 3.500L11 1l4.500 2-4.500 2zM1.500 5.500L6 7v5l-4-1.500zM7 7.300l3 1v4.500l-3-1zM2.300 11.500L6 13v4.500l-3-1.500z" fill="#1e9bea"/><path d="M16 4l4 1.500-4.500 2L12 6zM15.500 8.500L20 6.500v5l-4 1.500zM12 8.500l3 .5v3l-3 .5zM7.500 14l4-1 4 1-4 2zM7.500 15l3.500 1.700V21l-3.500-1.700zM12 16.700l3.500-1.700v4.300L12 21zM16.500 14l3-1.300-.5 4.500-2.500 1.300z" fill="#5fcb22"/></svg></div>
        <div class="dk"><svg viewBox="0 0 22 24"><ellipse cx="11" cy="22.500" rx="10" ry="1.500" fill="#c6c6c6"/><path d="M8 6l8 3 2 6-6 3-8 2z" fill="#1f6fc6"/><path d="M9 6l8 0-1 9-4-4z" fill="#123c68"/><path d="M2 4c2-4 7-2 6 2" stroke="#c2601a" stroke-width="3" fill="none"/><path d="M14 12c3 0 5 3 4 8l-5 1c3-3 3-5 1-9z" fill="#74b62a"/><circle cx="13" cy="2.500" r="2" fill="#c656e4"/><circle cx="19" cy="4" r="3" fill="#f6d040"/><circle cx="2.500" cy="10" r="2" fill="#e85ec0"/><circle cx="20" cy="11.500" r="2" fill="#f25a5a"/></svg></div>
        <div class="dk"><svg viewBox="0 0 22 24"><ellipse cx="13" cy="22" rx="9" ry="1.500" fill="#c9c9c9"/><path d="M1 6l15-5 6 10-14 9z" fill="#fff" stroke="#aaa"/><path d="M4 7l11-3.500 4 7-10 6z" fill="#5bb4ea"/><path d="M8 14l8-4 3 1-10 6z" fill="#5aa32e"/><path d="M8 13V9.500l4-1.500 3 3v2l-4 2z" fill="#fff" stroke="#2b5f9a" stroke-width=".8"/><path d="M13 11.500l4.500-2.500" stroke="#8a4a1c" stroke-width="1.500"/><path d="M3.500 7l4-2-2 4z" fill="#6ed037"/></svg></div>
        <div class="dk"><svg viewBox="0 0 22 24"><ellipse cx="11" cy="22.500" rx="9" ry="1.500" fill="#bbb"/><circle cx="11" cy="11.500" r="9.600" fill="#f4f7f9" stroke="#f29a1d" stroke-width="2.300"/><path d="M17 6l-3.500 8-5-4z" fill="#e0281e"/><path d="M5.500 18l3-8 5 4z" fill="#2a7ad0"/><path d="M9.500 6V3l3 3V3" stroke="#333" fill="none"/></svg></div>
      </aside>
    </div>
    <footer class="stat"><span class="s1">Page 1 / 1</span><span class="s2">Default</span><span class="s3">English (USA)</span><span class="s4">INSRT</span><span class="s5">STD</span><span class="s6"></span><span class="s7"></span><span class="s8"></span>
      <span class="s9"><svg class="p1"><use href="#vpage"/></svg><svg class="p2"><use href="#vpage"/></svg><svg class="p2"><use href="#vpage"/></svg><svg class="p3"><use href="#vpage"/></svg><svg class="p1"><use href="#vpage"/></svg></span>
      <span class="s10"><svg viewBox="0 0 136 16"><g fill="#cfe5f6" stroke="#3d5870" stroke-width="1.300"><circle cx="7" cy="8" r="5"/><circle cx="125" cy="8" r="5"/></g><path d="M4 8h6M122 8h6M125 5v6" stroke="#185a9a" stroke-width="1.500"/><path d="M18 7.500h97M18.500 6v3M35.500 3v10M66.500 3v10" stroke="#7a7a7a"/><circle cx="66" cy="8.500" r="3.700" fill="#5b93b8" stroke="#20435e"/></svg></span><span class="s11">100 %</span></footer>
  </div>
  <div class="task">
    <a><svg><use href="#win"/></svg></a><a><svg class="w20"><use href="#tview"/></svg></a><a class="act"><svg><use href="#texp"/></svg></a><a><svg><use href="#tcalc"/></svg></a><a class="run"><svg><use href="#chrome"/></svg></a><a><svg><use href="#onenote"/></svg></a><a><svg><use href="#nexus"/></svg></a><a><svg><use href="#news"/></svg></a><a><svg><use href="#book"/></svg></a><a class="run"><svg><use href="#npp"/></svg></a><a class="wf"><svg><use href="#wolf"/></svg></a><a class="run"><svg><use href="#brackets"/></svg></a><a class="run"><svg><use href="#gimp"/></svg></a><a class="run"><svg><use href="#ooo"/></svg></a>
    <i class="glow"></i><div class="tray t2"><span>2:30 PM</span></div>
  </div>
</section>
</main>
</body>
</html>
```
FILE: styles.css
```css
* { box-sizing: border-box; }
body { margin: 0; background: #000; font: 12px/16px "Open Sans", "Noto Sans", sans-serif; letter-spacing: -0.35px; color: #000; overflow: hidden; }
svg { display: block; flex: none; }
i { display: block; flex: none; }
b { font-weight: 400; }
.defs { position: absolute; width: 0; height: 0; }
.i16 { width: 16px; height: 16px; }
.screens { display: flex; width: 3286px; height: 1080px; }
.screen { width: 1920px; height: 1080px; display: flex; flex-direction: column; background: #fff; }
.second { width: 1366px; height: 1080px; padding-top: 130px; display: flex; flex-direction: column; background: #000; }

/* Explorer title, ribbon tabs, address */
.title { height: 23px; display: flex; align-items: center; }
.title .vline { width: 1px; height: 12px; background: #888; margin: 0 10px 0 7px; }
.title .vline.b { margin: 0 7px 0 8px; }
.title .chk { width: 14px; height: 16px; margin-right: 7px; }
.title .qat { width: 8px; height: 8px; margin-left: 7px; margin-top: 4px; }
.title > .i16.f { margin-left: -1px; }
.wctl { margin-left: auto; display: flex; align-items: center; color: #000; padding-right: 20px; }
.wctl svg { width: 10px; height: 10px; margin-left: 36px; }
.wctl .mv { width: 11px; height: 8px; margin: -2px 20px 0 0; }
.tabs { height: 24px; display: flex; border-bottom: 1px solid #dadbdc; color: #444; line-height: 24px; }
.tabs b { width: 56px; height: 23px; background: #1979ca; color: #fff; text-align: center; margin-right: 14px; }
.tabs span { margin-right: 27px; }
.tabs .chev { width: 10px; height: 8px; margin: 8px 10px 0 auto; }
.tabs .help { width: 14px; height: 14px; margin: 4px 4px 0 0; }
.addr { height: 35px; padding-top: 6px; display: flex; }
.arrows { width: 106px; height: 22px; }
.path { width: 1552px; height: 22px; border: 1px solid #d9d9d9; display: flex; align-items: center; padding-left: 2px; }
.path .cr { width: 6px; height: 8px; margin: 0 8px 0 7px; fill: none; stroke: #666; stroke-width: 1.6; }
.path .i16 + .cr { margin: 0 9px 0 6px; }
.path .dn { width: 10px; height: 8px; margin: 2px 4px 0 auto; }
.path .ref { width: 21px; height: 20px; border-left: 1px solid #d9d9d9; }
.search { width: 238px; height: 22px; margin-left: 12px; border: 1px solid #d9d9d9; display: flex; align-items: center; padding: 0 8px; color: #767676; }
.search svg { width: 12px; height: 12px; margin-left: auto; }

/* Folder tree */
.body { height: 945px; display: flex; overflow: hidden; }
.tree { width: 212px; padding-top: 16px; overflow: hidden; }
.r { width: 211px; height: 24px; padding: 0 2px 0 32px; display: flex; align-items: center; }
.r svg { width: 16px; height: 16px; margin-right: 5px; }
.r span { flex: 1; white-space: nowrap; overflow: hidden; }
.r .long { letter-spacing: -0.38px; }
.r .pin { width: 12px; height: 12px; margin: 0 0 0 1px; }
.r.l1 { padding-left: 24px; }
.r.gap { margin-top: 8px; }
.r.on { background: #d9d9d9; }
.vbar { width: 16px; background: #f0f0f0; display: flex; flex-direction: column; align-items: center; border-right: 1px solid #f8f8f8; }
.vbar svg { width: 10px; height: 8px; margin: 5px 0 4px; }
.vbar i { width: 15px; height: 778px; background: #cdcdcd; }
.vbar .end { margin: auto 0 4px; }
.files { width: 1692px; margin-left: 2px; border-left: 1px solid #ececec; padding-left: 15px; }
.head { width: 578px; height: 25px; display: flex; line-height: 26px; color: #44597c; }
.head span { border-right: 1px solid #e0e0e0; padding-left: 6px; width: 120px; }
.head span:first-child { width: 258px; display: flex; padding-left: 4px; }
.head svg { width: 8px; height: 5px; margin: 0 auto 0 88px; }
.head span:last-child { width: 80px; }
.head + .fr { margin-top: 6px; }
.fr { width: 574px; height: 21px; display: flex; align-items: center; color: #6d6d6d; line-height: 21px; }
.fr svg { width: 16px; height: 16px; margin: 0 4px; }
.fr b { width: 240px; color: #000; }
.fr span { width: 120px; }
.fr.foc { height: 22px; padding-bottom: 1px; box-shadow: inset 0 0 0 1px #8fcaf2; }
.items { height: 23px; display: flex; align-items: center; padding-left: 14px; color: #26426a; }
.items i { width: 1px; height: 15px; background: #ececec; margin-left: 11px; }
.modes { margin-left: auto; display: flex; align-items: center; padding-right: 8px; }
.modes .on { width: 22px; height: 23px; background: #cce8f6; box-shadow: inset 0 0 0 1px #2e9bd8; margin-right: 4px; }
.modes .th { width: 14px; height: 14px; }

/* Taskbar */
.task { height: 30px; background: #05060a; display: flex; position: relative; color: #fff; }
.task a { width: 37px; height: 30px; display: flex; align-items: center; justify-content: center; }
.task a svg { width: 16px; height: 16px; }
.task a .w20 { width: 20px; }
.task .wf { padding-left: 4px; }
.task .act { background: #38393b; box-shadow: inset 0 -2px #98a9b6; }
.task .run { background: linear-gradient(#98a9b6, #98a9b6) center bottom / 28px 2px no-repeat; }
.tray { margin-left: auto; display: flex; align-items: center; padding-right: 3px; }
.tray .tu { width: 12px; height: 8px; margin-right: 10px; }
.tray .vol { width: 17px; height: 14px; margin-right: 12px; }
.tray .note { width: 16px; height: 16px; margin: 1px 20px 0 22px; }
.tray i { width: 1px; height: 30px; background: #555; }
.tray.t2 { padding-right: 10px; }
.glow { width: 31px; height: 30px; background: #17191c; margin-left: 159px; }

/* Writer */
.writer { height: 738px; background: #fff; display: flex; flex-direction: column; }
.wtitle { height: 24px; display: flex; align-items: center; color: #999; padding-left: 3px; letter-spacing: -0.3px; }
.wtitle span { margin-left: 4px; }
.wtitle .wctl { color: #999; padding-right: 20px; }
.menu { height: 22px; display: flex; line-height: 22px; padding-left: 6px; border-bottom: 1px solid #d9d9d9; }
.menu span { margin-right: 12px; }
.menu u { text-underline-offset: 2px; }
.menu svg { width: 8px; height: 8px; margin: 7px 8px 0 auto; }
.bars { height: 31px; display: flex; }
.bars.two { border-bottom: 1px solid #c0c0c0; height: 32px; }
.bar { height: 31px; display: flex; align-items: center; border-right: 1px solid #bdbdbd; border-bottom: 1px solid #bdbdbd; }
.bar.std { width: 810px; }
.bar.find { width: 180px; }
.bar.fmt { width: 847px; border-bottom: 0; }
.grip { width: 1px; height: 18px; margin: 0 6px 0 4px; background: repeating-linear-gradient(#666 0 1px, transparent 1px 4px); }
.bar a { width: 25px; height: 26px; display: flex; align-items: center; justify-content: center; flex: none; }
.bar a svg { width: 16px; height: 16px; }
.bar a.on { background: #cde8ff; box-shadow: inset 0 0 0 1px #99d1ff; }
.flip svg { transform: scaleX(-1); }
.turn svg { transform: rotate(180deg); }
.dd { width: 11px; height: 3px; background: #000; clip-path: polygon(27% 0, 73% 0, 50% 100%); }
.dd.off { background: #aaa; }
.sep { width: 8px; height: 15px; background: linear-gradient(#bbb, #bbb) center / 1px 15px no-repeat; }
.more { width: 10px; height: 25px; margin-left: 7px; background: linear-gradient(#eee, #8f8f8f); display: flex; align-items: flex-end; justify-content: center; padding-bottom: 4px; }
.more::after { content: ""; border: 3px solid transparent; border-top-color: #000; border-bottom: 0; }
.find .grip { margin-right: 8px; }
.find .combo { margin-left: -1px; }
.find .more { margin-left: 6px; }
.combo { height: 23px; border: 1px solid #a0a0a0; background: #fff; display: flex; align-items: center; padding: 0 1px 0 4px; flex: none; }
.combo b { width: 17px; height: 19px; margin-left: auto; background: #e1e1e1; border: 1px solid #adadad; display: flex; align-items: center; justify-content: center; }
.combo svg { width: 10px; height: 8px; }
.fi { width: 100px; color: #777; }
.c1 { width: 137px; margin-left: 9px; }
.c2 { width: 154px; margin-left: 8px; letter-spacing: -0.2px; }
.c3 { width: 62px; margin: 0 7px 0 8px; }
.bar .tx { font-size: 17px; color: #233746; letter-spacing: 0; }
.bar .bo { font-weight: 800; font-size: 18px; }
.bar .it { font: italic 700 19px "Liberation Serif", serif; }
.bar .un { text-decoration: underline; text-underline-offset: 2px; font-weight: 600; font-size: 16px; }
.pdf { font: 700 5.5px "Open Sans", sans-serif; fill: #fff; text-anchor: middle; letter-spacing: 0; }
.abc { font: 800 7px "Open Sans", sans-serif; fill: #1d3b50; text-anchor: middle; letter-spacing: 0; }
.hl { font: 700 9px "Open Sans", sans-serif; letter-spacing: -0.5px; }
.edit { height: 607px; display: flex; background: #f0f0f0; }
.pane { width: 1319px; border-top: 1px solid #696969; border-left: 1px solid #a0a0a0; box-shadow: inset 1px 0 #696969; padding-left: 1px; border-right: 1px solid #e3e3e3; }
.up { display: flex; height: 588px; border-bottom: 0; }
.left { width: 1300px; }
.hrule { width: 1300px; height: 26px; }
.num text { font: 12px "Open Sans", sans-serif; text-anchor: middle; letter-spacing: 0; fill: #111; }
.work { display: flex; height: 562px; }
.vrule { width: 26px; height: 562px; }
.canvas { width: 1274px; height: 562px; background: #ababab; border-left: 1px solid #000; border-top: 1px solid #000; padding: 37px 0 0 227px; overflow: hidden; }
.page { width: 818px; height: 600px; background: #fff; border: 1px solid #000; box-shadow: 2px 2px #000; padding: 76px 0 0 76px; }
.frame { width: 665px; height: 560px; border: 1px solid #c0c0c0; }
.vs { width: 16px; border-left: 1px solid #fff; display: flex; flex-direction: column; align-items: center; }
.vs > svg { width: 10px; height: 8px; margin: 5px 0 4px; }
.vs > i { width: 15px; height: 248px; background: #cdcdcd; }
.vs > .end { margin: auto 0 5px; }
.vs b { width: 15px; height: 15px; margin-bottom: 2px; background: #e6e6e6; box-shadow: inset 0 0 0 1px #a0a0a0; }
.vs b:last-child { margin-bottom: 1px; }
.hs { height: 16px; width: 1300px; display: flex; align-items: center; border-top: 1px solid #fff; }
.hs svg { width: 8px; height: 10px; margin: 0 4px; }
.hs i { width: 1267px; height: 15px; background: #cdcdcd; }
.hs .rt { margin-left: 5px; }
.split { width: 8px; border-left: 1px solid #fff; border-top: 1px solid #a0a0a0; border-right: 1px solid #a0a0a0; padding: 424px 0 0 1px; }
.split svg { width: 3px; height: 52px; }
.deck { width: 38px; border: 1px solid #a0a0a0; border-left: 0; display: flex; flex-direction: column; align-items: center; }
.dm { width: 10px; height: 9px; margin: 14px 0 14px; }
.rule { width: 24px; height: 1px; background: #d8d8d8; }
.dk { width: 32px; height: 32px; margin-bottom: 3px; display: flex; align-items: center; justify-content: center; }
.dk.on { border: 1px solid #a8a8a8; border-radius: 4px; margin-top: 3px; }
.dk svg { width: 22px; height: 24px; }
.stat { height: 22px; background: #f0f0f0; border-top: 1px solid #fff; display: flex; line-height: 22px; margin-top: auto; }
.stat span { flex: none; height: 17px; line-height: 19px; margin-top: 3px; border-right: 1px solid #a0a0a0; padding-left: 5px; display: flex; align-items: center; }
.stat .s1 { width: 228px; padding-left: 10px; }
.stat .s2 { width: 209px; }
.stat .s3 { width: 242px; justify-content: center; padding: 0 7px 0 0; }
.stat .s4 { width: 45px; }
.stat .s5 { width: 35px; }
.stat .s6 { width: 15px; }
.stat .s7 { width: 30px; }
.stat .s8 { width: 299px; }
.stat .s9 { width: 75px; padding-left: 6px; }
.stat .s9 svg { width: 9px; height: 12px; margin-top: -2px; }
.s9 .p1 { color: #f7fafc; }
.s9 .p1:first-child { margin-right: 6px; }
.s9 .p2 { color: #9ec4ee; }
.s9 .p3 { color: #f7fafc; margin-left: 5px; transform: scaleX(-1); }
.stat .s10 { width: 143px; padding-left: 4px; }
.s10 svg { width: 136px; height: 16px; }
.stat .s11 { border: 0; padding-left: 4px; }
```
